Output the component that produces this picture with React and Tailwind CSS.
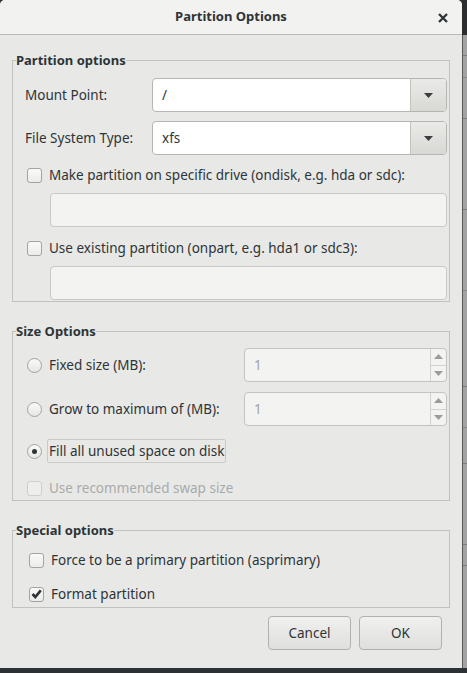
import React from 'react'

const font = { fontFamily: '"Noto Sans", "Open Sans", sans-serif' }

function Arrow({ up = false, className = '' }) {
  return (
    <svg width="9" height="5" viewBox="0 0 9 5" className={className}>
      {up ? <path d="M0 5 L4.5 0 L9 5 Z" fill="currentColor" /> : <path d="M0 0 L9 0 L4.5 5 Z" fill="currentColor" />}
    </svg>
  )
}

function Checkbox({ checked = false, disabled = false }) {
  return (
    <span
      className={`flex h-[15px] w-[15px] shrink-0 items-center justify-center rounded-[3px] border ${
        disabled ? 'border-[#cfcfcd] bg-[#eeeeec]' : 'border-[#a3a3a1] bg-gradient-to-b from-[#fafaf9] to-[#ebebea]'
      }`}
    >
      {checked && (
        <svg width="11" height="10" viewBox="0 0 11 10">
          <path d="M1.5 5 L4.3 8 L9.8 1.4" fill="none" stroke="#2e3436" strokeWidth="2.6" />
        </svg>
      )}
    </span>
  )
}

function Radio({ checked = false }) {
  return (
    <span className="flex h-[15px] w-[15px] shrink-0 items-center justify-center rounded-full border border-[#a3a3a1] bg-gradient-to-b from-[#fafaf9] to-[#e6e6e4]">
      {checked && <span className="h-[5px] w-[5px] rounded-full bg-[#2e3436]" />}
    </span>
  )
}

function Combo({ value }) {
  return (
    <div className="flex h-[34px] flex-1 overflow-hidden rounded-[4px] border border-[#b5b5b2] bg-white">
      <div className="flex flex-1 items-center px-[9px] text-[13.5px] text-[#2e3436]">{value}</div>
      <div className="flex w-[36px] items-center justify-center border-l border-[#c2c2bf] bg-gradient-to-b from-[#eaeae8] to-[#d8d8d5] text-[#393f3f]">
        <Arrow />
      </div>
    </div>
  )
}

function Spin({ value }) {
  return (
    <div className="flex h-[34px] w-[203px] overflow-hidden rounded-[4px] border border-[#c3c3c0] bg-[#f3f3f2]">
      <div className="flex flex-1 items-center px-[9px] text-[13.5px] text-[#a2a4a4]">{value}</div>
      <div className="flex w-[16px] flex-col border-l border-[#d2d2cf] text-[#9a9c9c]">
        <div className="flex flex-1 items-center justify-center border-b border-[#d2d2cf]">
          <Arrow up />
        </div>
        <div className="flex flex-1 items-center justify-center">
          <Arrow />
        </div>
      </div>
    </div>
  )
}

function Entry() {
  return <div className="ml-[25px] h-[34px] rounded-[4px] border border-[#c8c8c5] bg-[#f3f3f2]" />
}

function Frame({ title, className = '', inner = '', children }) {
  return (
    <fieldset className={`mx-[12px] border border-[#c1c1be] p-0 ${className}`}>
      <legend className="ml-[3px] px-0 text-[13px] font-bold leading-[20px] text-[#2e3436]">{title}</legend>
      <div className={inner}>{children}</div>
    </fieldset>
  )
}

export default function App() {
  return (
    <div className="flex h-[673px] w-[467px] flex-col bg-[#2e3133]" style={font}>
      <div className="flex h-[668px]">
        <div className="flex w-[462px] flex-col overflow-hidden rounded-t-[5px] bg-[#e8e8e7] text-[13.5px] text-[#2e3436]">
          {/* title bar */}
          <div className="relative flex h-[35px] shrink-0 items-center justify-center border-b border-[#b9b9b6] bg-[#f2f2f1]">
            <span className="text-[13px] font-bold">Partition Options</span>
            <svg width="10" height="10" viewBox="0 0 10 10" className="absolute right-[14px] top-[13px]">
              <path d="M1 1 L9 9 M9 1 L1 9" stroke="#2e3436" strokeWidth="2.3" />
            </svg>
          </div>

          <Frame title="Partition options" className="mt-[15px]" inner="pl-[12px] pr-[2px]">
            <div className="mt-[8px] flex items-center">
              <span className="w-[127px]">Mount Point:</span>
              <Combo value="/" />
            </div>
            <div className="mt-[9px] flex items-center">
              <span className="w-[127px]">File System Type:</span>
              <Combo value="xfs" />
            </div>
            <div className="mt-[9px] flex h-[22px] items-center gap-[7px] pl-[2px]">
              <Checkbox />
              <span>Make partition on specific drive (ondisk, e.g. hda or sdc):</span>
            </div>
            <div className="mt-[7px]">
              <Entry />
            </div>
            <div className="mt-[10px] flex h-[22px] items-center gap-[7px] pl-[2px]">
              <Checkbox />
              <span>Use existing partition (onpart, e.g. hda1 or sdc3):</span>
            </div>
            <div className="mt-[7px] mb-[1px]">
              <Entry />
            </div>
          </Frame>

          <Frame title="Size Options" className="mt-[19px]" inner="pb-[1px] pl-[14px] pr-[2px]">
            <div className="mt-[7px] flex items-center">
              <div className="flex flex-1 items-center gap-[7px]">
                <Radio />
                <span>Fixed size (MB):</span>
              </div>
              <Spin value="1" />
            </div>
            <div className="mt-[10px] flex items-center">
              <div className="flex flex-1 items-center gap-[7px]">
                <Radio />
                <span>Grow to maximum of (MB):</span>
              </div>
              <Spin value="1" />
            </div>
            <div className="mt-[13px] flex h-[24px] items-center gap-[5px]">
              <Radio checked />
              <span className="flex h-[24px] items-center rounded-[2px] border border-[#cacac7] pr-[1px] pl-[1px]">
                Fill all unused space on disk
              </span>
            </div>
            <div className="mt-[14px] flex h-[22px] items-center gap-[7px] text-[#a9abab]">
              <Checkbox disabled />
              <span>Use recommended swap size</span>
            </div>
          </Frame>

          <Frame title="Special options" className="mt-[19px]" inner="pb-[2px] pl-[16px] pr-[2px]">
            <div className="mt-[9px] flex h-[23px] items-center gap-[7px]">
              <Checkbox />
              <span>Force to be a primary partition (asprimary)</span>
            </div>
            <div className="mt-[11px] flex h-[22px] items-center gap-[7px]">
              <Checkbox checked />
              <span>Format partition</span>
            </div>
          </Frame>

          <div className="mt-[8px] flex justify-end gap-[8px] pr-[20px]">
            <button className="h-[34px] w-[83px] rounded-[4px] border border-[#b1b1ae] bg-gradient-to-b from-[#f0f0ef] to-[#dfdfdd] text-[#2e3436]">
              Cancel
            </button>
            <button className="h-[34px] w-[83px] rounded-[4px] border border-[#b1b1ae] bg-gradient-to-b from-[#f0f0ef] to-[#dfdfdd] text-[#2e3436]">
              OK
            </button>
          </div>
        </div>

        {/* window behind */}
        <div className="flex w-[5px] flex-col">
          <div className="h-[35px] bg-[#2b2d2e]" />
          <div className="flex flex-1 flex-col border-l border-[#5a5a5a] bg-[#a3a3a3]">
            <div className="mt-[20px] h-[1px] bg-[#7e7e7e]" />
            <div className="mt-[21px] h-[1px] bg-[#8a8a8a]" />
            <div className="mt-[40px] h-[1px] bg-[#7e7e7e]" />
            <div className="mt-[90px] h-[1px] bg-[#7e7e7e]" />
            <div className="mt-[80px] h-[1px] bg-[#8a8a8a]" />
            <div className="mt-[95px] h-[1px] bg-[#7e7e7e]" />
            <div className="mt-[40px] h-[1px] bg-[#8a8a8a]" />
            <div className="mt-[35px] h-[1px] bg-[#7e7e7e]" />
            <div className="mt-[80px] h-[1px] bg-[#7e7e7e]" />
            <div className="mt-[20px] h-[1px] bg-[#7e7e7e]" />
          </div>
        </div>
      </div>
    </div>
  )
}
